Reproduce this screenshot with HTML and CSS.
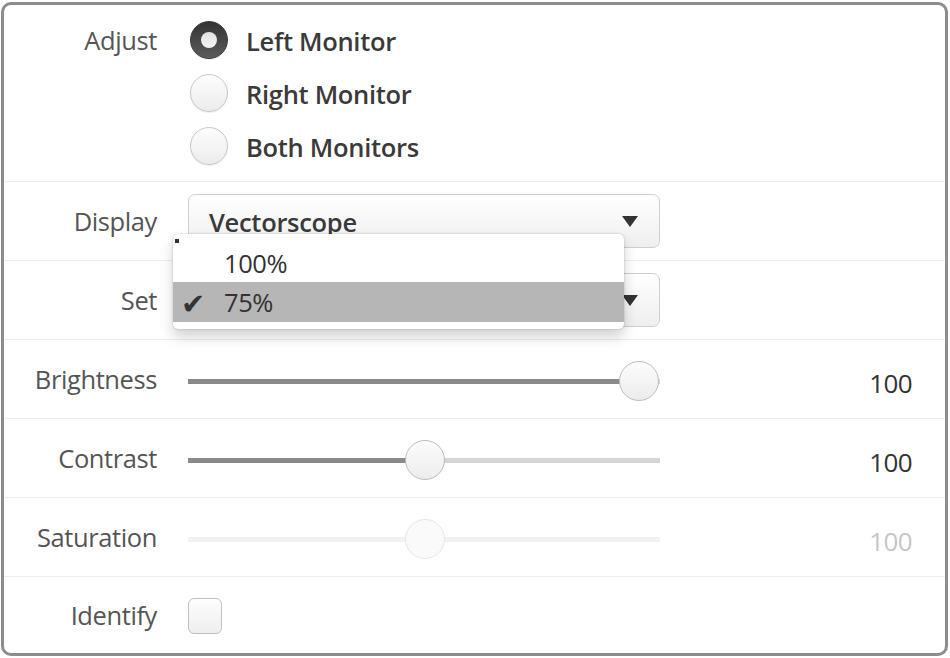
FILE: index.html
```html
<!DOCTYPE html>
<html>
<head>
<meta charset="utf-8">
<link rel="stylesheet" href="styles.css">
</head>
<body>
<div class="frame">
  <div class="row row-adjust">
    <div class="label">Adjust</div>
    <div class="radios">
      <div class="radio-item"><span class="radio checked"></span><span class="radio-text">Left Monitor</span></div>
      <div class="radio-item"><span class="radio"></span><span class="radio-text">Right Monitor</span></div>
      <div class="radio-item"><span class="radio"></span><span class="radio-text">Both Monitors</span></div>
    </div>
  </div>
  <div class="row">
    <div class="label">Display</div>
    <div class="select"><span class="select-text">Vectorscope</span><span class="arrow"></span></div>
  </div>
  <div class="row">
    <div class="label">Set</div>
    <div class="select select-open"><span class="select-text">75%</span><span class="arrow"></span></div>
  </div>
  <div class="row">
    <div class="label">Brightness</div>
    <div class="slider"><div class="fill" style="width: 451px"></div><div class="thumb" style="left: 451px"></div></div>
    <div class="value">100</div>
  </div>
  <div class="row">
    <div class="label">Contrast</div>
    <div class="slider"><div class="fill" style="width: 237px"></div><div class="thumb" style="left: 237px"></div></div>
    <div class="value">100</div>
  </div>
  <div class="row disabled">
    <div class="label">Saturation</div>
    <div class="slider"><div class="thumb" style="left: 237px"></div></div>
    <div class="value">100</div>
  </div>
  <div class="row row-last">
    <div class="label">Identify</div>
    <div class="checkbox"></div>
  </div>

  <div class="menu">
    <span class="menu-dot"></span>
    <div class="menu-item">100%</div>
    <div class="menu-item selected"><span class="check">&#10004;</span><span>75%</span></div>
  </div>
</div>
</body>
</html>
```

FILE: styles.css
```css
* { box-sizing: border-box; }
html, body { margin: 0; padding: 0; background: #fff; }
body {
  font-family: "Open Sans", "Liberation Sans", sans-serif;
  width: 950px;
  height: 658px;
  overflow: hidden;
}
.frame {
  position: relative;
  margin: 2px 2px 0 1px;
  height: 654px;
  border: 3px solid #8d8d8d;
  border-radius: 10px;
  background: #fff;
}
.row {
  display: grid;
  grid-template-columns: 153px 472px 221px;
  column-gap: 31px;
  align-items: center;
  height: 79px;
  border-bottom: 1px solid #ededed;
}
.row-adjust {
  height: 177px;
  align-items: start;
  padding-top: 16px;
}
.row-last { border-bottom: none; height: 75px; }
.label {
  text-align: right;
  font-size: 25.5px;
  color: #555;
  letter-spacing: -0.4px;
  line-height: 34px;
}
.row-adjust .label { padding-top: 2px; }
.radios { display: flex; flex-direction: column; gap: 15px; padding-left: 2px; }
.radio-item { display: flex; align-items: center; height: 38px; gap: 18px; }
.radio {
  width: 38px; height: 38px; border-radius: 50%;
  border: 1px solid #c8c8c8;
  background: linear-gradient(#fdfdfd, #ececec);
  box-shadow: 0 1px 1px rgba(0,0,0,0.08);
  position: relative;
  flex: none;
}
.radio.checked {
  border: 1px solid #3a3a3a;
  background: linear-gradient(#333, #5c5c5c);
}
.radio.checked::after {
  content: "";
  position: absolute;
  left: 10px; top: 10px;
  width: 16px; height: 16px;
  border-radius: 50%;
  background: linear-gradient(#e2e2e2, #f4f4f4);
}
.radio-text {
  font-size: 25.5px;
  font-weight: 600;
  color: #3a3a3a;
  letter-spacing: -0.3px;
  padding-top: 2px;
}
.select {
  height: 54px;
  border: 1px solid #cfcfcf;
  border-radius: 7px;
  background: linear-gradient(#fff, #efefef);
  display: flex;
  align-items: center;
  justify-content: space-between;
  padding: 0 21px 0 20px;
}
.select-text {
  font-size: 25.5px; font-weight: 600; color: #3a3a3a; letter-spacing: -0.3px;
  padding-top: 2px;
}
.select-open .select-text { visibility: hidden; }
.arrow {
  width: 0; height: 0;
  border-left: 8px solid transparent;
  border-right: 8px solid transparent;
  border-top: 11px solid #333;
}
.slider {
  position: relative;
  height: 5px;
  background: #d6d6d6;
  margin-top: 4px;
}
.fill {
  position: absolute; left: 0; top: 0; bottom: 0;
  background: #8a8a8a;
}
.thumb {
  position: absolute;
  top: 50%;
  width: 40px; height: 40px;
  margin: -20px 0 0 -20px;
  border-radius: 50%;
  border: 1px solid #bcbcbc;
  background: linear-gradient(#fcfcfc, #ececec);
}
.value {
  font-size: 26px; color: #333; text-align: right; letter-spacing: -0.6px;
  padding-top: 8px;
}
.disabled .slider { background: #f1f1f1; }
.disabled .thumb { border-color: #e6e6e6; background: #fafafa; }
.disabled .value { color: #c6c6c6; }
.checkbox {
  width: 34px; height: 36px;
  border: 1px solid #c2c2c2;
  border-radius: 6px;
  background: linear-gradient(#fdfdfd, #eeeeee);
  margin-top: 2px;
}
.menu {
  position: absolute;
  left: 169px; top: 229px;
  width: 451px; height: 95px;
  background: #fff;
  border-radius: 5px;
  box-shadow: 0 8px 14px rgba(0,0,0,0.18), 0 0 2px rgba(0,0,0,0.25);
  padding-top: 10px;
}
.menu-dot {
  position: absolute; left: 2px; top: 5px; width: 4px; height: 4px; background: #333;
}
.menu-item {
  height: 38px;
  display: flex; align-items: center;
  padding-left: 51px;
  font-size: 25.5px; color: #333; letter-spacing: -0.4px;
  position: relative;
}
.menu-item.selected { background: #b6b6b6; height: 40px; padding-left: 10px; gap: 13px; }
.check {
  font-size: 25px; color: #333; line-height: 30px; width: 28px; flex: none;
  transform: scale(1.15);
}
```
